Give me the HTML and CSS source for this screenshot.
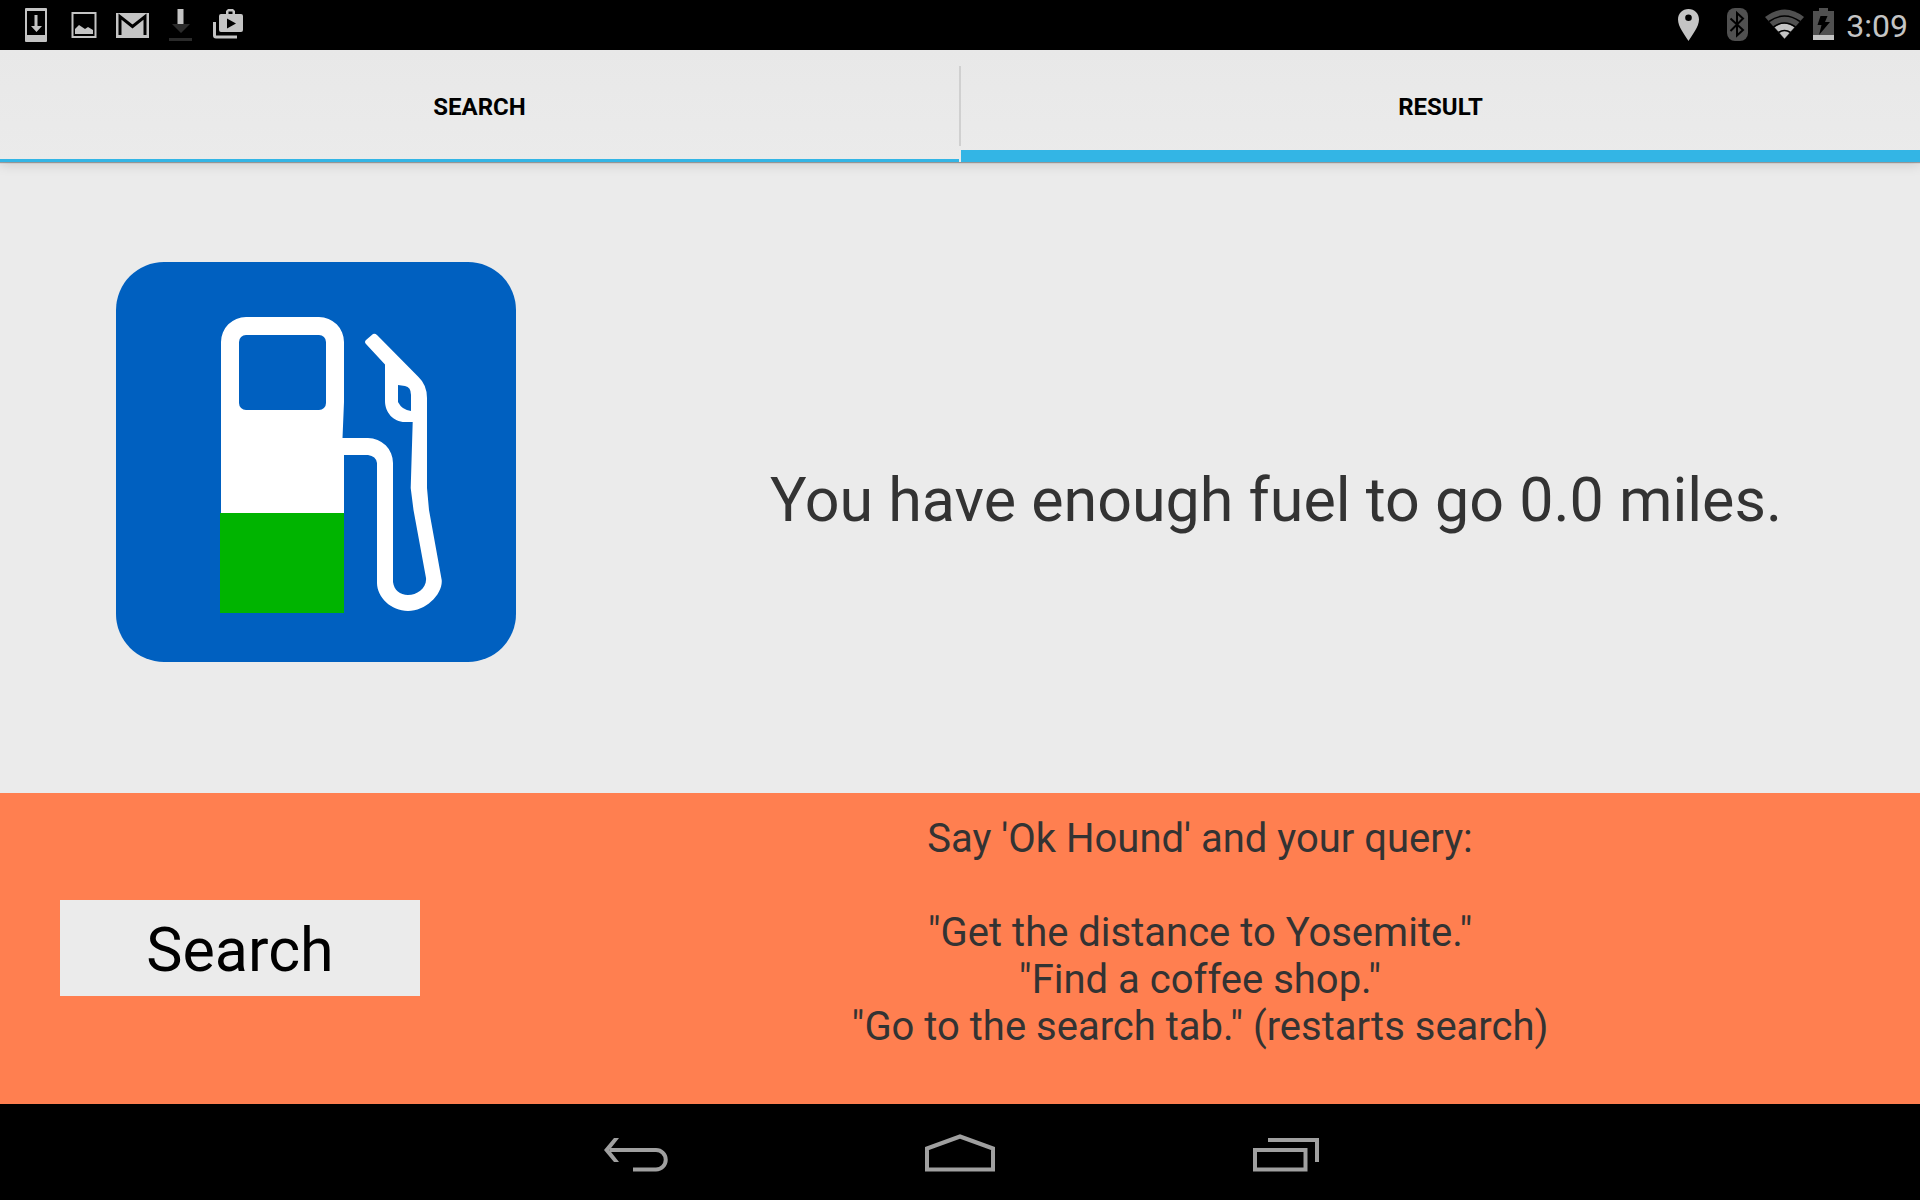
FILE: index.html
```
<!DOCTYPE html>
<html lang="en">
<head>
<meta charset="utf-8">
<meta name="viewport" content="width=device-width, initial-scale=1">
<title>Fuel range</title>
<link rel="stylesheet" href="styles.css">
</head>
<body>
<header class="status">
  <div class="status-group">
    <svg class="status-icon" viewBox="0 0 48 50" aria-hidden="true"><path fill="#c4c4c4" fill-rule="evenodd" d="M14 8h20a1 1 0 0 1 1 1v32a1 1 0 0 1-1 1H14a1 1 0 0 1-1-1V9a1 1 0 0 1 1-1zM15 11v24h18V11zM22.500 15h3v11h4.500l-5.500 6-5.500-6h3.500z"/></svg>
    <svg class="status-icon" viewBox="0 0 48 50" aria-hidden="true"><path fill="none" stroke="#c4c4c4" stroke-width="2" d="M12.500 13h23v24h-23z"/><path fill="#c4c4c4" d="M15 34v-5l4-4 6 4 3-2 5 3v4z"/></svg>
    <svg class="status-icon" viewBox="0 0 48 50" aria-hidden="true"><path fill="#c4c4c4" d="M8 13h33v25H8z"/><path fill="none" stroke="#000" stroke-width="3" d="M12 35V16.500L24.500 26.500 37 16.500V35"/></svg>
    <svg class="status-icon" viewBox="0 0 48 50" aria-hidden="true"><path fill="#2b2b2b" d="M16 24h18l-9 9zM13 38h23v3H13z"/><path fill="#c4c4c4" d="M21.500 9h6v15h-6z"/></svg>
    <svg class="status-icon" viewBox="0 0 48 50" aria-hidden="true"><path fill="#c4c4c4" fill-rule="evenodd" d="M17 14h5v-3l2-2h5l2 2v3h6a2 2 0 0 1 2 2v14a2 2 0 0 1-2 2H17a2 2 0 0 1-2-2V16a2 2 0 0 1 2-2zM24.500 11.500V14h4v-2.500zM23 18.500v10l9-5z"/><path fill="none" stroke="#c4c4c4" stroke-width="3" d="M10.500 22v13.500a1.500 1.500 0 0 0 1.500 1.500h21"/></svg>
  </div>
  <div class="status-group">
    <svg class="status-icon" viewBox="0 0 48 50" aria-hidden="true"><path fill="#c4c4c4" fill-rule="evenodd" d="M23.500 9C17.500 9 13 13.500 13 19.500 13 27 20 35 23.500 41 27 35 34 27 34 19.500 34 13.500 29.500 9 23.500 9zm0 5.500a3.300 3.300 0 1 1 0 6.600 3.300 3.300 0 0 1 0-6.600z"/></svg>
    <svg class="status-icon" viewBox="0 0 48 50" aria-hidden="true"><rect x="14" y="8" width="21" height="33" rx="8" fill="#505050"/><path fill="none" stroke="#000" stroke-width="2" d="M17.500 18.500 30 30l-6 5.500V13l6 5.500L17.500 31"/></svg>
    <svg class="status-icon" viewBox="0 0 48 50" aria-hidden="true"><path fill="#505050" d="M4 17q20-15 39 0L23.500 39z"/><path fill="#c4c4c4" d="M13.500 27q10-7 20 0l-10 11.500z"/><path fill="none" stroke="#000" stroke-width="1.600" d="M8 21.500q15.500-11 31 0M12.500 27q11-8 22 0M17.500 32.500q6-4 12 0"/></svg>
    <svg class="status-icon status-icon-narrow" viewBox="0 0 32 50" aria-hidden="true"><path fill="#505050" d="M4 11h6V8h9v3h6v24H4z"/><path fill="#c4c4c4" d="M4 35h21v5H4z"/><path fill="#000" d="M11.500 16h7l-2.500 6h5L10 35l2.500-10h-4z"/></svg>
    <time class="clock">3:09</time>
  </div>
</header>
<nav class="tabs">
  <button class="tab" type="button">SEARCH</button>
  <span class="tab-divider"></span>
  <button class="tab tab-active" type="button">RESULT</button>
</nav>
<main class="result">
  <svg class="pump" viewBox="0 0 400 400" role="img" aria-label="Fuel pump">
    <rect width="400" height="400" rx="48" fill="#0060c0"/>
    <path fill="#fff" d="M105 252V80A25 25 0 0 1 130 55H203A25 25 0 0 1 228 80V140L226.500 176H252A25 25 0 0 1 277 201V320C278 328 284 333 292 333C301 333 311 326 310 316L297.500 248L294.700 226L296.700 160H289C277 160 269 150 269 139V102.500L250 82Q248 80 250 78L257 72Q259 71 261 73L302.500 115Q311 123 311 136V226L313 248L325.700 318C327 332 310 349 292 349C275 349 261 335 261 321V201Q260 194 252 193H228V252z"/>
    <rect x="123" y="73" width="87" height="75" rx="7" fill="#0060c0"/>
    <path fill="#0060c0" d="M282 123l7 1q6 1 6 9v16q-9-1-13-9z"/>
    <path fill="#00b400" d="M104 251h124v100H104z"/>
  </svg>
  <p class="result-text">You have enough fuel to go 0.0 miles.</p>
</main>
<section class="voice">
  <div class="voice-action"><button class="search-button" type="button">Search</button></div>
  <div class="hints">
    <p>Say 'Ok Hound' and your query:</p>
    <ul class="queries">
      <li>"Get the distance to Yosemite."</li>
      <li>"Find a coffee shop."</li>
      <li>"Go to the search tab." (restarts search)</li>
    </ul>
  </div>
</section>
<footer class="system-nav">
  <button type="button" aria-label="Back"><svg class="nav-icon" viewBox="0 0 80 96" aria-hidden="true"><path fill="none" stroke="#a0a0a0" stroke-width="4" d="M10 46h46a9.750 9.750 0 0 1 0 19.500H33"/><path fill="#a0a0a0" d="M14 34h5L9.500 46 19 58h-5L4 46z"/></svg></button>
  <button type="button" aria-label="Home"><svg class="nav-icon" viewBox="0 0 80 96" aria-hidden="true"><path fill="none" stroke="#a0a0a0" stroke-width="4" d="M7 65.500V44.500L40 32.500 73 44.500V65.500z"/></svg></button>
  <button type="button" aria-label="Recent apps"><svg class="nav-icon" viewBox="0 0 80 96" aria-hidden="true"><path fill="none" stroke="#a0a0a0" stroke-width="4" d="M15 46h50.500v19.500H15zM28 36h49v22"/></svg></button>
</footer>
</body>
</html>
```
FILE: styles.css
```
* {
  box-sizing: border-box;
}

body {
  margin: 0;
  min-height: 100vh;
  display: flex;
  flex-direction: column;
  background: #ebebeb;
  color: #333;
  font-family: Roboto, "Liberation Sans", sans-serif;
}

button {
  border: 0;
  padding: 0;
  background: none;
  color: #000;
  font-family: inherit;
}

p,
ul {
  margin: 0;
  padding: 0;
}

.status {
  display: flex;
  justify-content: space-between;
  height: 50px;
  padding: 0 12px;
  background: #000;
}

.status-group {
  display: flex;
}

.status-icon {
  width: 48px;
  height: 50px;
}

.status-icon-narrow {
  width: 32px;
}

.clock {
  padding-left: 5px;
  color: #c4c4c4;
  font-size: 32px;
  line-height: 52px;
}

.tabs {
  display: flex;
  height: 112px;
  background: linear-gradient(#e8e8e8, #ebebeb);
  box-shadow: 0 1px 1px rgba(0, 0, 0, 0.3), 0 2px 12px rgba(0, 0, 0, 0.15);
}

.tab {
  flex: 1;
  border-bottom: 3px solid #33b5e5;
  padding-top: 4px;
  font-size: 24px;
  font-weight: 700;
}

.tab-active {
  border-bottom-width: 12px;
  padding-top: 13px;
}

.tab-divider {
  width: 2px;
  height: 80px;
  margin-top: 16px;
  background: #d0d0d0;
}

.result {
  flex: 1;
  display: grid;
  grid-template-columns: 79fr 161fr;
  align-items: start;
  justify-items: center;
  padding-top: 100px;
}

.pump {
  width: 400px;
  height: 400px;
}

.result-text {
  padding-top: 203px;
  font-size: 61px;
  line-height: 70px;
  text-align: center;
}

.voice {
  display: grid;
  grid-template-columns: 1fr 3fr;
  min-height: 311px;
  background: #ff7f50;
}

.voice-action {
  display: flex;
  align-items: start;
  padding: 107px 60px;
}

.search-button {
  flex: 1;
  height: 96px;
  padding-top: 4px;
  background: #ebebeb;
  font-size: 61px;
}

.hints {
  padding-top: 22px;
  font-size: 40px;
  line-height: 47px;
  text-align: center;
}

.queries {
  padding-top: 47px;
  list-style: none;
}

.system-nav {
  display: flex;
  justify-content: center;
  gap: 240px;
  height: 96px;
  background: #000;
}

.nav-icon {
  display: block;
  width: 80px;
  height: 96px;
}
```
